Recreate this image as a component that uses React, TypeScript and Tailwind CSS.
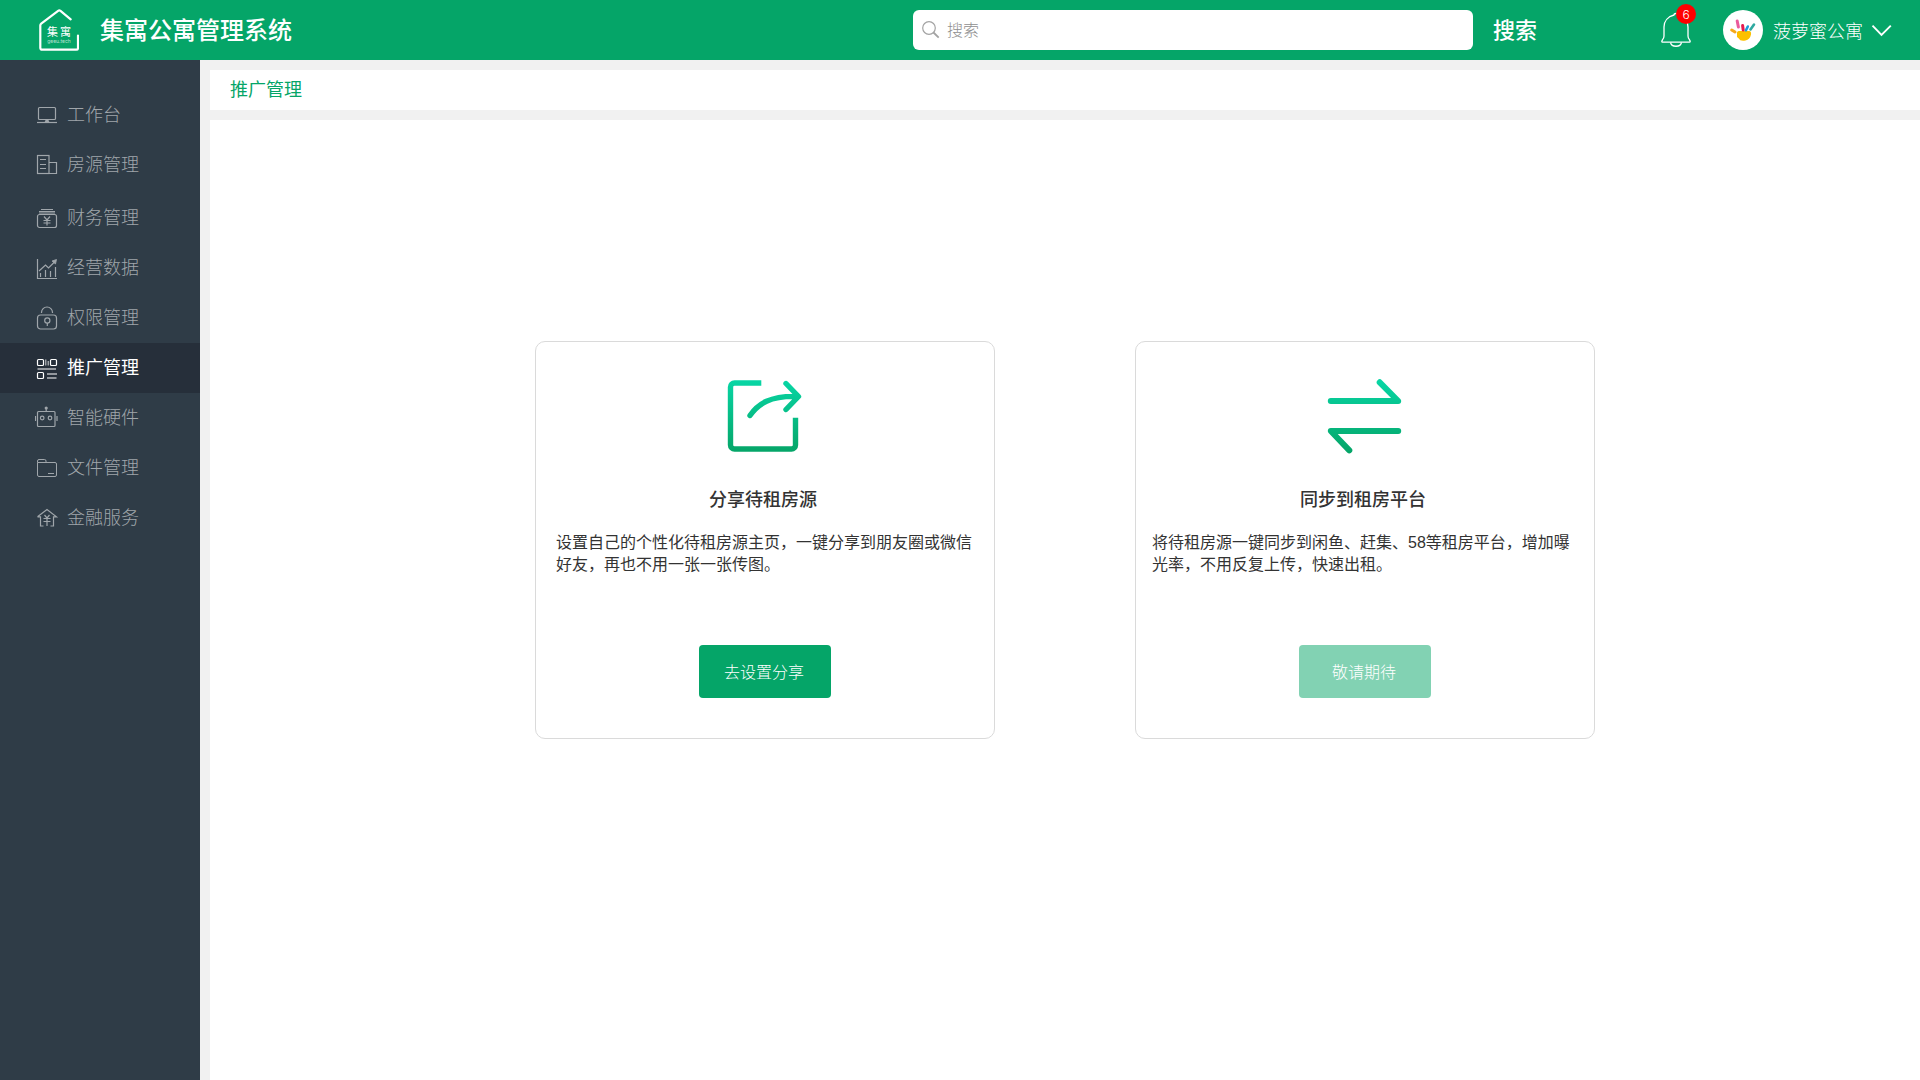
import type { ReactNode } from "react";

const yen = (cx: number, top: number) => (
  <path
    d={`M${cx - 3} ${top}L${cx} ${top + 3.5}L${cx + 3} ${top}M${cx} ${top + 3.5}V${top + 9}M${cx - 3.5} ${top + 4}H${cx + 3.5}M${cx - 3.5} ${top + 6.5}H${cx + 3.5}`}
  />
);

const icons: Record<string, ReactNode> = {
  desk: (
    <>
      <rect x="3.5" y="4.5" width="17" height="12" rx="1" />
      <path d="M2 19.5H22" />
      <path d="M10.5 17h3l1 2.5h-5z" fill="currentColor" stroke="none" />
    </>
  ),
  house: (
    <>
      <rect x="2.5" y="2.5" width="11.5" height="18" />
      <path d="M14 9.5H21.5V20.5H14M5 6.5H11M5 11.5H11M5 15.5H11" />
    </>
  ),
  finance: (
    <>
      <path d="M6 3.5H18M4 5.5H20M4 7H20" />
      <rect x="2.5" y="8.5" width="19" height="13" rx="2" />
      {yen(12, 10.5)}
    </>
  ),
  chart: (
    <>
      <path d="M2.5 3V22.5H22M5.5 17V21M10.5 14V21M15.5 15V21M20.5 11V21" />
      <path d="M4 15L10.5 9L13.5 12L20 5.5" />
      <path d="M17 5L21.5 3.5L20.5 8z" fill="currentColor" strokeWidth=".8" />
    </>
  ),
  lock: (
    <>
      <rect x="2.5" y="9" width="19" height="14" rx="3" />
      <path d="M6.5 7V6.5a5.5 5.5 0 0 1 11 0V7" />
      <circle cx="12.3" cy="14.5" r="2.6" />
      <path d="M12.3 17V20" />
    </>
  ),
  promote: (
    <>
      <rect x="2.5" y="3.5" width="6" height="6" rx="1" />
      <rect x="15.5" y="3.5" width="6" height="6" rx="1" />
      <rect x="2.5" y="16.5" width="6" height="6" rx="1" />
      <path d="M10.8 3.5V9.5M13.2 5V9.5" strokeWidth=".8" />
      <path d="M2.5 13H21M12 18H22M12 22H21.5" />
    </>
  ),
  robot: (
    <>
      <rect x="2.5" y="5.5" width="17.5" height="15" rx="1" />
      <circle cx="11.2" cy="2" r="1.6" fill="currentColor" stroke="none" />
      <path d="M11.2 2V5.5M.5 10V15M22 10V15" />
      <circle cx="7.2" cy="12" r="1.8" />
      <circle cx="15" cy="12" r="1.8" />
    </>
  ),
  folder: (
    <>
      <path
        d="M2.5 6.5V5Q2.5 3.5 4 3.5H9.5Q11 3.5 11 5V6.5H20Q21.5 6.5 21.5 8V19Q21.5 20.5 20 20.5H4Q2.5 20.5 2.5 19V6.5H11"
        strokeWidth="1"
      />
      <path d="M13 17.5H19" strokeWidth="1" />
    </>
  ),
  service: (
    <>
      <path d="M2.5 10.8L12 3.5L21.5 10.8H18.5V20H15.5M2.5 10.8H5.5V20H8.5" />
      <path d="M9.5 9L12 12L14.5 9M12 12V20M8.5 12.5H15.5M8.5 15.5H15.5" />
    </>
  ),
};

const menu = [
  [
    { icon: "desk", label: "工作台" },
    { icon: "house", label: "房源管理" },
  ],
  [
    { icon: "finance", label: "财务管理" },
    { icon: "chart", label: "经营数据" },
    { icon: "lock", label: "权限管理" },
    { icon: "promote", label: "推广管理" },
    { icon: "robot", label: "智能硬件" },
    { icon: "folder", label: "文件管理" },
    { icon: "service", label: "金融服务" },
  ],
];

function Logo() {
  return (
    <svg className="h-[42px] w-10 shrink-0" viewBox="0 0 40 42" fill="none" aria-hidden="true">
      <path
        d="M31.7 10.3L21.5 1.8Q20.3.9 19.1 1.8L2.2 14.6Q1.3 15.3 1.3 16.5V38.7Q1.3 40.7 3.3 40.7H37.3Q39 40.7 39 39V26.5"
        stroke="#fff"
        strokeWidth="2.2"
        strokeLinecap="round"
        strokeLinejoin="round"
      />
      <text x="8" y="27" fill="#fff" fontSize="11" fontFamily="'Noto Sans CJK SC', sans-serif">集</text>
      <text x="21" y="27" fill="#fff" fontSize="11" fontFamily="'Noto Sans CJK SC', sans-serif">寓</text>
      <text x="20" y="34" fill="#fff" fillOpacity=".7" fontSize="5" textAnchor="middle" fontFamily="Inter, sans-serif">geeu.tech</text>
    </svg>
  );
}

function Avatar() {
  return (
    <svg className="h-10 w-10" viewBox="0 0 40 40" fill="none" strokeLinecap="round" aria-hidden="true">
      <circle cx="20" cy="20" r="20" fill="#fff" />
      <path d="M14 23.5Q13.5 21.5 16 21H26Q28.5 21 28 24.5Q27 29.5 22.5 30.5Q17 31.5 15.8 28.5L14 27z" fill="#fcc000" />
      <path d="M8.7 20L12 22" stroke="#f5a81c" strokeWidth="3" />
      <path d="M14.2 11L15.4 17" stroke="#ea5a9c" strokeWidth="3" />
      <path d="M19.6 15.5L20.2 20" stroke="#e5194f" strokeWidth="3" />
      <path d="M24.8 16.5L23 20.3" stroke="#1c9bdc" strokeWidth="2.6" />
      <path d="M31 14.5L27.5 19.5" stroke="#2fa9a0" strokeWidth="2.6" />
    </svg>
  );
}

function Header() {
  return (
    <header className="flex h-[60px] shrink-0 items-center bg-[#05a568] pl-[39px] pr-7 text-white">
      <Logo />
      <h1 className="ml-[21px] whitespace-nowrap pb-0.5 text-2xl font-medium">集寓公寓管理系统</h1>
      <form className="ml-auto flex items-center" onSubmit={(e) => e.preventDefault()}>
        <label className="flex h-10 w-[560px] items-center gap-[7px] rounded-md bg-white pl-[9px] pr-3">
          <svg className="h-[18px] w-[18px] shrink-0" viewBox="0 0 18 18" fill="none" stroke="#a3a3a3" aria-hidden="true">
            <circle cx="7" cy="7" r="6.3" strokeWidth="1.2" />
            <path d="M11.5 11.5L16.7 16.7" strokeWidth="1.8" />
          </svg>
          <input
            type="search"
            aria-label="搜索"
            placeholder="搜索"
            className="w-full bg-transparent pb-0.5 text-base font-light text-[#333] outline-none placeholder:text-[#8f8f8f]"
          />
        </label>
        <button type="submit" className="ml-5 pb-1 text-[22px] font-medium">搜索</button>
      </form>
      <button type="button" aria-label="通知" className="relative ml-[124px] h-9 w-[30px]">
        <svg className="h-9 w-[30px]" viewBox="0 0 30 36" fill="none" stroke="#fff" strokeWidth="1.3" strokeLinejoin="round" aria-hidden="true">
          <path d="M13 3Q13 1.5 15 1.5T17 3C23 4.5 27 9 27 15V24Q27 26 28.4 27.6Q30 30.2 28.4 30.2H1.6Q0 30.2 1.6 27.6Q3 26 3 24V15C3 9 7 4.5 13 3z" />
          <path d="M9.5 30.5C10.5 35.5 19.5 35.5 20.5 30.5" />
        </svg>
        <span className="absolute -top-2 left-[15px] flex h-5 w-5 items-center justify-center rounded-full bg-[#ff0000] pt-0.5 font-[Inter] text-xs font-light">
          6
        </span>
      </button>
      <button type="button" className="ml-8 flex items-center">
        <Avatar />
        <span className="ml-[10px] whitespace-nowrap text-lg font-light">菠萝蜜公寓</span>
        <svg className="ml-2 h-5 w-[21px]" viewBox="0 0 21 20" fill="none" stroke="#fff" strokeWidth="1.9" aria-hidden="true">
          <path d="M1.5 5.7L10.5 15L19.8 5.7" />
        </svg>
      </button>
    </header>
  );
}

function Sidebar() {
  return (
    <nav className="flex w-[200px] shrink-0 flex-col gap-[3px] bg-[#2f3c47] pt-[30px]">
      {menu.map((group, i) => (
        <ul key={i}>
          {group.map(({ icon, label }) => {
            const active = label === "推广管理";
            return (
              <li key={label}>
                <a
                  href="#"
                  aria-current={active ? "page" : undefined}
                  className={`flex h-[50px] items-center gap-2 pl-[35px] text-lg ${
                    active ? "bg-[#262f3a] text-white" : "font-light text-[#a0a6ab]"
                  }`}
                >
                  <svg className="h-6 w-6 shrink-0" viewBox="0 0 24 24" fill="none" stroke="currentColor" strokeWidth="1.2" aria-hidden="true">
                    {icons[icon]}
                  </svg>
                  <span className="pb-1">{label}</span>
                </a>
              </li>
            );
          })}
        </ul>
      ))}
    </nav>
  );
}

function Gradient({ id }: { id: string }) {
  return (
    <defs>
      <linearGradient id={id} gradientUnits="userSpaceOnUse" x1="0" y1="3" x2="0" y2="75">
        <stop offset="0" stopColor="#08d6a5" />
        <stop offset="1" stopColor="#05a568" />
      </linearGradient>
    </defs>
  );
}

function Card({ icon, title, text, padding, children }: { icon: ReactNode; title: string; text: string; padding: string; children: ReactNode }) {
  return (
    <section className="flex w-[460px] flex-col items-center rounded-[10px] border border-[#dadada] pb-10 pt-[35px]">
      {icon}
      <h2 className="mt-[27px] pr-1 text-lg font-medium text-[#333]">{title}</h2>
      <p
        className={`mt-5 w-full font-['Liberation_Sans','Noto_Sans_CJK_SC',sans-serif] text-base leading-[22px] text-[#333] ${padding}`}
      >
        {text}
      </p>
      <div className="mt-[69px]">{children}</div>
    </section>
  );
}

export default function App() {
  return (
    <div className="flex min-h-screen flex-col bg-[#f1f1f1] font-['Noto_Sans_CJK_SC',sans-serif]">
      <Header />
      <div className="flex flex-1">
        <Sidebar />
        <main className="flex min-w-0 flex-1 flex-col gap-[10px] pl-[10px] pt-[10px]">
          <div className="flex h-10 items-center bg-white pb-1 pl-5 text-lg text-[#05a568]">推广管理</div>
          <div className="flex flex-1 flex-wrap content-start justify-center gap-[140px] bg-white pb-10 pt-[221px]">
            <Card
              title="分享待租房源"
              text="设置自己的个性化待租房源主页，一键分享到朋友圈或微信好友，再也不用一张一张传图。"
              padding="px-5"
              icon={
                <svg className="h-20 w-20" viewBox="0 0 80 80" fill="none" aria-hidden="true">
                  <Gradient id="share" />
                  <g stroke="url(#share)" strokeWidth="5.4">
                    <path d="M36.3 6H9.5a4 4 0 0 0-4 4V68a4 4 0 0 0 4 4H66.5a4 4 0 0 0 4-4V40.7" />
                    <path d="M25 38.5C33 27 45 18.5 73 19.5M61 6.5L73.5 19.5L61 32.5" strokeLinecap="round" strokeLinejoin="round" />
                  </g>
                </svg>
              }
            >
              <button type="button" className="h-[53px] w-[132px] rounded bg-[#05a568] pb-0.5 pr-0.5 text-base font-light text-white">去设置分享</button>
            </Card>
            <Card
              title="同步到租房平台"
              text="将待租房源一键同步到闲鱼、赶集、58等租房平台，增加曝光率，不用反复上传，快速出租。"
              padding="px-4"
              icon={
                <svg className="h-20 w-20" viewBox="0 0 80 80" fill="none" aria-hidden="true">
                  <Gradient id="sync" />
                  <g stroke="url(#sync)" strokeWidth="6" strokeLinecap="round" strokeLinejoin="round">
                    <path d="M5.8 24H73.2L54.7 5.3" />
                    <path d="M73.2 54H5.8L24.3 73.3" />
                  </g>
                </svg>
              }
            >
              <button type="button" disabled className="h-[53px] w-[132px] rounded bg-[#82d2b3] pb-0.5 pr-0.5 text-base font-light text-white">敬请期待</button>
            </Card>
          </div>
        </main>
      </div>
    </div>
  );
}
